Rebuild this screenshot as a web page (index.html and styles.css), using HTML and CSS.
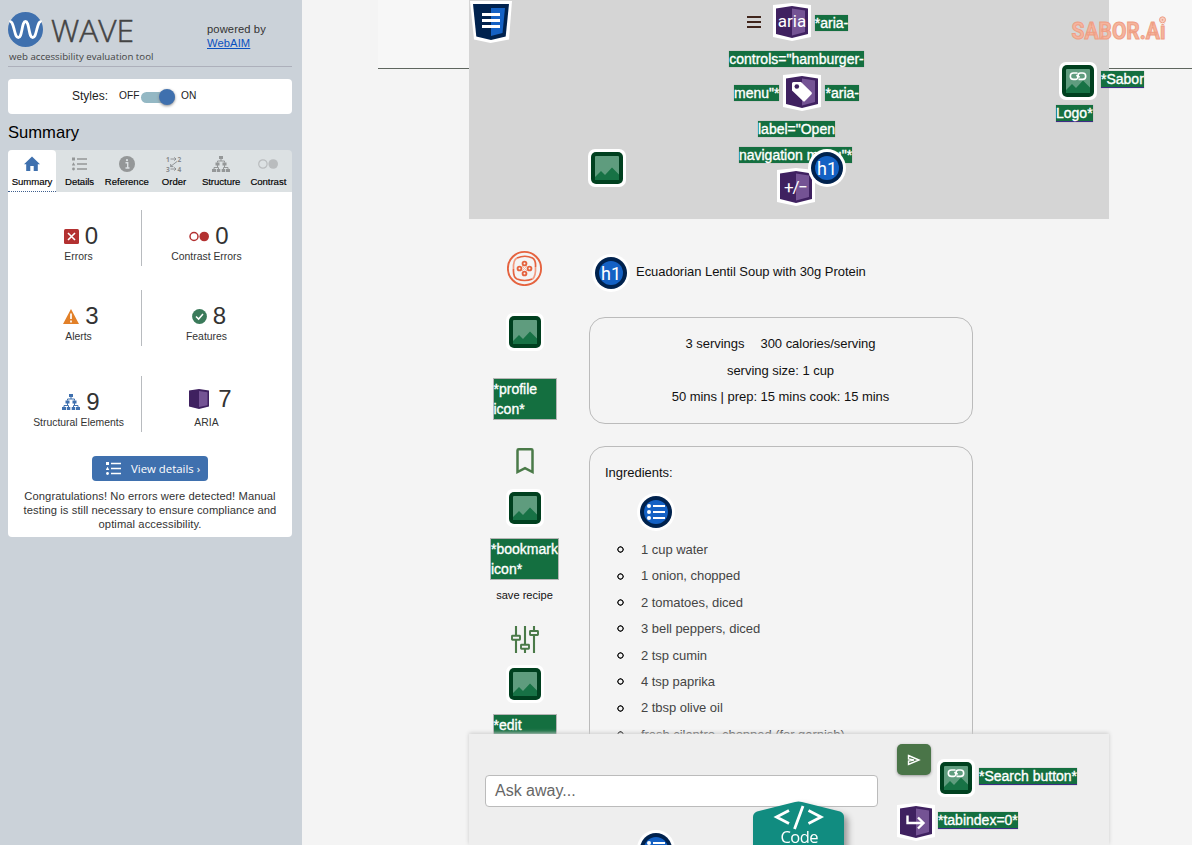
FILE: index.html
```html
<!DOCTYPE html>
<html lang="en">
<head>
<meta charset="utf-8">
<title>WAVE Report</title>
<link rel="stylesheet" href="styles.css">
</head>
<body>
<svg class="sprite" aria-hidden="true">
  <symbol id="img" viewBox="0 0 38 38">
    <rect width="38" height="38" rx="7" fill="#fff"/>
    <rect x="3" y="3" width="32" height="32" rx="5" fill="#00401f"/>
    <rect x="7" y="7" width="24" height="24" rx="1" fill="#5f9c7e"/>
    <path d="M7 28l6-6 4 4 7-7.500 7 7V31H7z" fill="#177245"/>
  </symbol>
  <symbol id="imglink" viewBox="0 0 38 38">
    <use href="#img"/>
    <path d="M18.500 11H14.500a3.200 3.200 0 0 0 0 6.400h2a2.400 2.400 0 0 0 2.400-2.400q0-1.500-1.700-1.500M19.500 17.400h4a3.200 3.200 0 0 0 0-6.400h-2a2.400 2.400 0 0 0-2.400 2.400q0 1.500 1.700 1.500" fill="none" stroke="#fff" stroke-width="1.600"/>
  </symbol>
  <symbol id="cube" viewBox="0 0 38 38">
    <path d="M0 2L19 0l19 2v32l-19 4-19-4z" fill="#fff"/>
    <path d="M3 5.500L19 3l16 2.500V31l-16 4-16-4z" fill="#3f2160"/>
    <path d="M19 5.500l13 2V29l-13 3.500z" fill="#745394"/>
  </symbol>
  <symbol id="disc" viewBox="0 0 38 38">
    <circle cx="19" cy="19" r="19" fill="#fff"/>
    <circle cx="19" cy="19" r="16" fill="#00224e"/>
    <circle cx="19" cy="19" r="12" fill="#1461c4"/>
  </symbol>
  <symbol id="h1" viewBox="0 0 38 38">
    <use href="#disc"/>
    <text x="19" y="25.500" text-anchor="middle" font-family="Roboto, sans-serif" font-size="18" fill="#fff">h1</text>
  </symbol>
  <symbol id="ul" viewBox="0 0 38 38">
    <use href="#disc"/>
    <path d="M16 13h12M16 19h12M16 25h12" stroke="#fff" stroke-width="2.200"/>
    <circle cx="12" cy="13" r="2" fill="#fff"/><circle cx="12" cy="19" r="2" fill="#fff"/><circle cx="12" cy="25" r="2" fill="#fff"/>
  </symbol>
  <symbol id="tree" viewBox="0 0 18 16">
    <path d="M7 0h4v3H7zM3.500 6.500h4v3h-4zM10.500 6.500h4v3h-4zM0 13h4v3H0zM4.800 13h3.500v3H4.800zM9.700 13h3.500v3H9.700zM14 13h4v3h-4z" fill="currentColor"/>
    <path d="M9 3v2M5.500 6.500V5h7v1.500M5.500 9v2.500M12.500 9v2.500M2 13v-1.500h4.500V13M11.500 13v-1.500H16V13" fill="none" stroke="currentColor"/>
  </symbol>
  <symbol id="list" viewBox="0 0 15 13">
    <path d="M5 1.500h10M5 6.500h10M5 11.500h10" stroke="currentColor" stroke-width="1.600"/>
    <path d="M0 0h3v3H0zM1.500 4.700L3.300 8H-.3z" fill="currentColor"/><circle cx="1.500" cy="11.500" r="1.400" fill="currentColor"/>
  </symbol>
</svg>

<aside class="sidebar">
  <header class="brand">
    <div class="brand-name">
      <div class="brand-row">
        <svg width="35" height="35" viewBox="0 0 35 35"><circle cx="17.500" cy="17.500" r="17.500" fill="#3f70ae"/><path d="M1.500 10C4 8.500 5 13 6.300 18c1.300 5 2 7.500 4 7.500s2.700-3 3.700-8c.9-5 1.600-8 3.500-8s2.600 3 3.500 8c1 5 1.700 8 3.700 8s2.700-2.500 4-7.500C30 13 31 8.500 33.500 10" fill="none" stroke="#fff" stroke-width="2.800"/></svg>
        <svg class="word" width="86" height="35" viewBox="0 0 86 35"><text class="wave-word" x="1" y="30" textLength="83" lengthAdjust="spacingAndGlyphs">WAVE</text></svg>
      </div>
      <div class="tagline">web accessibility evaluation tool</div>
    </div>
    <div class="powered">powered by<br><a href="#">WebAIM</a></div>
  </header>
  <section class="toggle-card">
    <span class="toggle-title">Styles:</span><span class="off">OFF</span><span class="switch"><span class="knob"></span></span><span>ON</span>
  </section>
  <h2 class="side-title">Summary</h2>
  <nav class="tabs">
    <a class="tab active"><svg width="16" height="15" viewBox="0 0 16 15"><path d="M8 0l8 7.700h-2.200V14.500H9.700V9.500H6.300v5H2.200V7.700H0z" fill="#3f70ae"/></svg>Summary</a>
    <a class="tab"><svg width="15" height="14"><use href="#list"/></svg>Details</a>
    <a class="tab"><svg width="16" height="16" viewBox="0 0 16 16"><circle cx="8" cy="8" r="8" fill="#949798"/><path d="M6.500 6.700H8.700V12M6.500 12h4" stroke="#dce1e3" stroke-width="1.400" fill="none"/><circle cx="8" cy="4.200" r="1.100" fill="#dce1e3"/></svg>Reference</a>
    <a class="tab"><svg width="16" height="18" viewBox="0 0 16 18"><g fill="none" stroke="#888b8d" stroke-width=".9"><path d="M4.500 4H10M8.300 2.300L10 4 8.300 5.700M11 6.500l-6.500 5M4.700 9v2.600h2.600M4.500 14H10M8.300 12.300L10 14l-1.700 1.700"/></g><g class="order-num"><text x="0" y="6.500">1</text><text x="11.500" y="6.500">2</text><text x="0" y="16.700">3</text><text x="11.500" y="16.700">4</text></g></svg>Order</a>
    <a class="tab"><svg width="18" height="16"><use href="#tree"/></svg>Structure</a>
    <a class="tab"><svg width="20" height="12" viewBox="0 0 20 12"><circle cx="4.900" cy="6" r="4.200" fill="none" stroke="#b9bcbe" stroke-width="1.200"/><circle cx="15.200" cy="6" r="4.800" fill="#b9bcbe"/></svg>Contrast</a>
  </nav>
  <section class="report">
    <div class="stat-row">
      <div class="stat left"><div class="count"><svg width="15" height="15" viewBox="0 0 15 15"><rect width="15" height="15" rx="1.500" fill="#b33131"/><path d="M4 4l7 7M11 4l-7 7" stroke="#fff" stroke-width="1.600"/></svg><b>0</b></div><p>Errors</p></div>
      <div class="stat right"><div class="count"><svg width="20" height="15" viewBox="0 0 20 15"><circle cx="5" cy="7.500" r="4" fill="#fff" stroke="#b33131" stroke-width="1.500"/><circle cx="15.200" cy="7.500" r="4.800" fill="#b33131"/></svg><b>0</b></div><p>Contrast Errors</p></div>
    </div>
    <div class="stat-row">
      <div class="stat left"><div class="count"><svg width="16" height="15" viewBox="0 0 16 15"><path d="M8 0l8 15H0z" fill="#e28028"/><path d="M8 4.500V10M8 11.500v2" stroke="#fff" stroke-width="1.700"/></svg><b>3</b></div><p>Alerts</p></div>
      <div class="stat right"><div class="count"><svg width="15" height="15" viewBox="0 0 15 15"><circle cx="7.500" cy="7.500" r="7.400" fill="#3a7a5a"/><path d="M4 7.500l2.600 2.600L11 5" fill="none" stroke="#fff" stroke-width="1.500"/></svg><b>8</b></div><p>Features</p></div>
    </div>
    <div class="stat-row last">
      <div class="stat left"><div class="count tree"><svg width="18" height="16"><use href="#tree"/></svg><b>9</b></div><p>Structural Elements</p></div>
      <div class="stat right"><div class="count aria"><svg width="20" height="20" viewBox="0 0 20 20"><path d="M0 1.500L10 0l10 1.500V17.500L10 20 0 17.500z" fill="#3f2160"/><path d="M10 2l8.500 1.300V16.300L10 18z" fill="#745394"/></svg><b>7</b></div><p>ARIA</p></div>
    </div>
    <button class="details"><svg width="15" height="13"><use href="#list"/></svg>View details ›</button>
    <p class="congrats">Congratulations! No errors were detected! Manual<br>testing is still necessary to ensure compliance and<br>optimal accessibility.</p>
  </section>
</aside>

<main class="page">
  <div class="topbar"></div>
  <div class="drawer">
    <svg class="nav-shield" width="44" height="43" viewBox="0 0 44 43"><path d="M0 1h42l-3 38.500L20.500 43 4 39.500z" fill="#fff"/><path d="M3 4h36l-3.300 32.500L21 40 6.300 36.500z" fill="#00224e"/><path d="M21 8h14l-2.500 25L21 36z" fill="#1461c4"/><path d="M12 14.500h18M12 20.500h18M12 26.500h18" stroke="#fff" stroke-width="3"/></svg>
    <svg class="drawer-img" width="38" height="38"><use href="#img"/></svg>
    <div class="menu">
      <div class="line l1"><svg class="burger" width="14" height="12" viewBox="0 0 14 12"><path d="M0 1h14M0 6h14M0 11h14" stroke="#41261c" stroke-width="2"/></svg><svg width="38" height="38"><use href="#cube"/><text class="cube-word" x="19" y="23.500">aria</text></svg><span class="tag">*aria-</span></div>
      <div class="line l2"><span class="tag">controls="hamburger-</span></div>
      <div class="line l3"><span class="tag">menu"*</span><svg width="38" height="38"><use href="#cube"/><path d="M10.500 9h7.500l10.500 10.300a1.500 1.500 0 0 1 0 2L22 28q-1 1-2 0L9 17.500V10.500Q9 9 10.500 9z" fill="#fff"/><circle cx="13.800" cy="13.500" r="2.300" fill="#3f2160"/></svg><span class="tag">*aria-</span></div>
      <div class="line l4"><span class="tag">label="Open</span></div>
      <div class="line l5"><span class="tag">navigation menu"*</span></div>
      <div class="line l6"><svg width="38" height="38"><use href="#cube"/><text class="cube-word" x="19" y="25" textLength="24">+/−</text></svg><svg class="over-h1" width="38" height="38"><use href="#h1"/></svg></div>
    </div>
  </div>
  <div class="sabor">
    <svg class="word" width="100" height="26" viewBox="0 0 100 26"><text class="sabor-word" x="1.500" y="24" textLength="94" lengthAdjust="spacingAndGlyphs">SABOR.Ai</text><circle cx="92.500" cy="4.800" r="4.200" fill="#f6f6f6"/><circle cx="92.500" cy="4.800" r="3" fill="#f7cfc2" stroke="#ef9e84"/><circle cx="92.500" cy="4.800" r=".9" fill="#ef9e84"/></svg>
    <p><svg width="38" height="38"><use href="#imglink"/></svg><span class="tag link">*Sabor</span></p>
    <span class="tag link">Logo*</span>
  </div>

  <div class="content">
    <div class="rail">
      <svg width="36" height="36" viewBox="0 0 36 36" fill="none" stroke="#e5633f"><circle cx="17.500" cy="18.500" r="16.600" stroke-width="1.900"/><path d="M10 8q8-3.500 15.500 0Q29 10 28.500 17M25.500 29q-8 3-15.500 0Q6 27 6.500 19" stroke-width="1.700"/><path d="M6.500 19Q6 10 10 8M28.500 17q.5 9-3 12" stroke="#f29a80" stroke-width="1.700"/><g stroke-width="1.900"><circle cx="17.500" cy="13.500" r="1.900"/><circle cx="17.500" cy="23.500" r="1.900"/><circle cx="12.500" cy="18.500" r="1.900"/><circle cx="22.500" cy="18.500" r="1.900"/></g><path d="M15 16l5 5M20 16l-5 5" stroke="#f5b5a2"/></svg>
      <svg class="m-profile" width="38" height="38"><use href="#img"/></svg>
      <div class="tag box">*profile<br>icon*</div>
      <svg class="bookmark" width="18" height="26" viewBox="0 0 18 26"><path d="M1.500 24V2.500Q1.500 1.300 2.700 1.300h12.600q1.200 0 1.200 1.200V24L9 20.200z" fill="none" stroke="#4a7a48" stroke-width="2.500"/></svg>
      <svg class="m-book" width="38" height="38"><use href="#img"/></svg>
      <div class="tag box wide">*bookmark<br>icon*</div>
      <div class="save">save recipe</div>
      <svg class="sliders" width="28" height="28" viewBox="0 0 28 28"><path d="M5 0v9M5 14v13M14 0v18M14 23v4M23 0v5M23 10v17" stroke="#4a7a48" stroke-width="2.100"/><g fill="none" stroke="#4a7a48" stroke-width="1.900"><rect x="1" y="9.800" width="8" height="4" rx=".5"/><rect x="10" y="18.800" width="8" height="4" rx=".5"/><rect x="19" y="5" width="8" height="4" rx=".5"/></g></svg>
      <svg class="m-edit" width="38" height="38"><use href="#img"/></svg>
      <div class="tag box">*edit<br>icon*</div>
    </div>
    <div class="recipe">
      <h1><svg width="38" height="38"><use href="#h1"/></svg><span>Ecuadorian Lentil Soup with 30g Protein</span></h1>
      <section class="card facts">
        <p><span class="servings">3 servings</span><span>300 calories/serving</span></p>
        <p>serving size: 1 cup</p>
        <p>50 mins | prep: 15 mins cook: 15 mins</p>
      </section>
      <section class="card ingredients">
        <p>Ingredients:</p>
        <svg width="38" height="38"><use href="#ul"/></svg>
        <ul><li>1 cup water</li><li>1 onion, chopped</li><li>2 tomatoes, diced</li><li>3 bell peppers, diced</li><li>2 tsp cumin</li><li>4 tsp paprika</li><li>2 tbsp olive oil</li><li>fresh cilantro, chopped (for garnish)</li></ul>
      </section>
    </div>
  </div>

  <footer class="chat">
    <div class="ask">Ask away...</div>
    <div class="actions">
      <div class="action-row">
        <button class="send"><svg width="14" height="12" viewBox="0 0 14 12"><path d="M1.500 1.500L12 6 1.500 10.500V7L7 6 1.500 5z" fill="none" stroke="#fff" stroke-width="1.400"/></svg></button>
        <svg class="m-search" width="38" height="38"><use href="#imglink"/></svg><span class="tag link search">*Search button*</span>
      </div>
      <div class="action-row second">
        <svg width="38" height="38"><use href="#cube"/><path d="M10.500 12.500V20H26M21 14.500l5.500 5.500-5.500 5.500" fill="none" stroke="#fff" stroke-width="2.400"/></svg><span class="tag link">*tabindex=0*</span>
      </div>
    </div>
    <svg class="over-list" width="38" height="38"><use href="#ul"/></svg>
    <svg class="code" width="112" height="48" viewBox="0 0 112 48"><path d="M4 17Q4 13 8 11.500L46 2q3.500-1 7 0l38 9.500Q95 13 95 17V60H4z" fill="#118c80"/><path d="M40 10.500L27.500 17 40 23.500M59.500 10.500L72 17 59.500 23.500M54 6l-8.500 23" fill="none" stroke="#fff" stroke-width="2.800"/><text class="code-word" x="50.500" y="43" textLength="38">Code</text></svg>
  </footer>
</main>
</body>
</html>
```
FILE: styles.css
```css
* { box-sizing: border-box; }
body { margin: 0; width: 1192px; height: 845px; display: flex; overflow: hidden; font-family: "Liberation Sans", Arial, sans-serif; color: #111; }
p, h1, h2, ul { margin: 0; padding: 0; font-weight: normal; }
svg { display: block; flex: none; }
button { border: 0; padding: 0; }
.sprite { position: absolute; width: 0; height: 0; }
.word { overflow: visible; }

.sidebar { width: 302px; flex: none; background: #cbd2d9; padding: 12px 10px 0 8px; }
.brand { display: flex; justify-content: space-between; height: 55px; border-bottom: 1px solid #adb0bb; }
.brand-row { display: flex; gap: 7px; height: 35px; }
.wave-word { font: 300 32px "Open Sans", sans-serif; fill: #444; stroke: #444; stroke-width: .5px; }
.tagline { font: 9.700px/12px "Open Sans", sans-serif; color: #444; padding: 4px 0 0 1px; white-space: nowrap; }
.powered { width: 85px; padding-top: 10px; font-size: 11.200px; line-height: 14px; letter-spacing: .1px; color: #333; }
.powered a { color: #0a50c0; }
.toggle-card { display: flex; align-items: center; height: 35px; margin-top: 12px; padding: 0 0 2px 64px; background: #fff; border-radius: 4px; font-size: 10.200px; color: #222; }
.toggle-title { font-size: 12px; margin-right: 11px; }
.off { width: 22px; }
.switch { position: relative; width: 34px; height: 11px; margin: 3px 6px 0 0; border-radius: 6px; background: #94b8c4; }
.knob { position: absolute; right: 0; top: -3px; width: 16px; height: 16px; border-radius: 50%; background: #3f70ae; box-shadow: 0 1px 3px #888; }
.side-title { font-size: 16.600px; line-height: 20px; margin: 9px 0 7px; color: #000; }
.tabs { display: flex; height: 42px; background: #dce1e3; border-radius: 4px 4px 0 0; color: #949798; }
.tab { width: 47.200px; height: 42px; position: relative; display: flex; flex-direction: column; align-items: center; font-size: 9.600px; line-height: 11px; letter-spacing: -.05px; color: #000; -webkit-text-stroke: .15px #000; }
.tab svg { color: #949798; height: 18px; margin: 5px 0 3px; -webkit-text-stroke: 0; }
.tab.active { background: #fff; border-radius: 4px 4px 0 0; border-bottom: 1px dotted #3f5f8e; width: 48px; }
.order-num text { font: 700 6.500px "Noto Sans", sans-serif; fill: #888b8d; }
.report { height: 345px; background: #fff; border-radius: 0 0 4px 4px; padding-top: 18px; color: #333; }
.stat-row { display: flex; height: 56px; margin-bottom: 24px; }
.stat-row.last { margin-top: 30px; }
.stat { display: flex; flex-direction: column; align-items: center; }
.left { width: 134px; padding-left: 8px; border-right: 1px solid #b8bbbf; }
.right { width: 150px; padding-right: 21px; }
.count { display: flex; align-items: center; gap: 6px; height: 28px; margin: 12px 0 0 5px; }
.count b { font-weight: normal; font-size: 24px; line-height: 28px; }
.stat p { font-size: 10.400px; line-height: 12px; padding-top: 1px; }
.tree { color: #3f70ae; }
.tree b { color: #333; }
.aria { margin: 9px 0 3px 8px; gap: 9px; }
.details { display: flex; align-items: center; gap: 10px; width: 116px; height: 25px; margin-left: 84px; padding: 0 0 1px 14px; border-radius: 4px; background: #3f70ae; color: #fff; font: 11.400px "Open Sans", sans-serif; white-space: nowrap; }
.congrats { margin: 8px 0 0; text-align: center; font-size: 11.200px; letter-spacing: .08px; line-height: 14px; white-space: nowrap; }

.page { position: relative; flex: 1; height: 845px; overflow: hidden; background: #f4f4f4; }
.topbar { height: 69px; margin: 0 0 -69px 76px; border-bottom: 1px solid #5f665f; background: #f7f7f7; }
.drawer { position: relative; display: flex; width: 640px; height: 219px; margin-left: 167px; padding-left: 1px; background: #d5d5d5; }
.drawer-img { margin: 149px 0 0 74px; }
.menu { width: 135px; margin-left: 103px; padding-top: 3px; }
.line { display: flex; align-items: center; justify-content: center; gap: 4px; height: 38px; }
.burger { margin-right: 8px; }
.l1 { padding-left: 2px; } .l1 .tag { margin-top: 1px; }
.l2 { height: 36px; }
.l3 { height: 30px; } .l3 .tag { margin-top: 2px; }
.l4 { height: 44px; } .l5 { height: 8px; padding-right: 2px; } .l6 { margin-top: 9px; padding-right: 2px; position: relative; }
.over-h1 { position: absolute; left: 79px; top: -19px; }
.tag { background: #146f40; color: #fff; font-size: 14px; line-height: 16px; height: 16px; white-space: nowrap; -webkit-text-stroke: .35px #fff; box-shadow: 0 0 1px #999; }
.link { height: 17px; border-bottom: 1px solid #3f2c86; margin-bottom: -1px; }
.cube-word { font: 17px Roboto, sans-serif; fill: #fff; text-anchor: middle; }
.sabor { position: absolute; left: 754px; top: 15px; }
.sabor > svg { margin-left: 14px; }
.sabor-word { font: 700 24px Roboto, sans-serif; fill: #f5b49d; stroke: #ef9e84; stroke-width: 1px; }
.sabor p { display: flex; align-items: center; gap: 4px; height: 38px; margin: 21px 0 4px 3px; }
.sabor p .tag { margin-top: -4px; }
.sabor > .tag { display: inline-block; }

.content { display: flex; padding: 31px 0 0 187px; }
.rail { width: 71px; display: flex; flex-direction: column; align-items: center; }
.m-profile { margin: 27px 0; }
.box { width: 64px; height: 42px; line-height: 20px; border: 1px solid #b5b5b5; box-shadow: none; }
.wide { width: 69px; }
.bookmark { margin: 28px 0 15px; }
.m-book { margin-bottom: 11px; }
.save { font-size: 11.100px; line-height: 14px; margin: 8px 0 24px; white-space: nowrap; }
.m-edit { margin: 11px 0; }
.recipe { width: 384px; margin-left: 29px; }
.recipe h1 { display: flex; gap: 6px; height: 38px; margin: 4px 0 25px 3px; font-size: 13px; letter-spacing: -.04px; line-height: 36px; }
.card { border: 1px solid #bbb; border-radius: 16px; font-size: 13px; letter-spacing: -.03px; color: #111; }
.facts { height: 107px; padding: 13px 1px 0 0; text-align: center; line-height: 26.500px; margin-bottom: 22px; }
.servings { margin-right: 16px; }
.ingredients { height: 520px; padding: 13px 0 0 15px; }
.ingredients p { line-height: 26px; }
.ingredients svg { margin: 7px 0 6px 32px; }
.ingredients ul { list-style: none; line-height: 26.400px; letter-spacing: -.04px; color: #444; }
.ingredients li { display: flex; align-items: center; gap: 17px; padding-left: 12px; }
.ingredients li::before { content: ""; width: 7px; height: 7px; margin-bottom: 1px; border-radius: 50%; background: radial-gradient(circle, #f4f4f4 1.600px, #222 2.300px, #222 3px, transparent 3.500px); }

.chat { position: absolute; left: 167px; bottom: 0; width: 640px; height: 111px; display: flex; gap: 19px; padding: 10px 0 0 16px; background: #eee; box-shadow: 0 -1px 4px #ccc; }
.ask { width: 393px; height: 32px; margin-top: 31px; padding-left: 9px; line-height: 29px; font-size: 16px; color: #666; background: #fff; border: 1px solid #bbb; border-radius: 4px; }
.action-row { display: flex; height: 59px; }
.send { width: 34px; height: 31px; display: grid; place-items: center; border-radius: 5px; background: #4a7548; box-shadow: 0 1px 3px #999; }
.m-search { margin: 15px 4px 0 6px; }
.search { margin: 24px 0 0; }
.second { gap: 3px; align-items: center; height: 38px; }
.second .tag { margin-top: -4px; }
.over-list { position: absolute; left: 168px; top: 96px; }
.code { position: absolute; left: 280px; top: 66px; filter: drop-shadow(4px 4px 3px #999); }
.code-word { font: 16.500px "Open Sans", sans-serif; fill: #fff; text-anchor: middle; }
```
